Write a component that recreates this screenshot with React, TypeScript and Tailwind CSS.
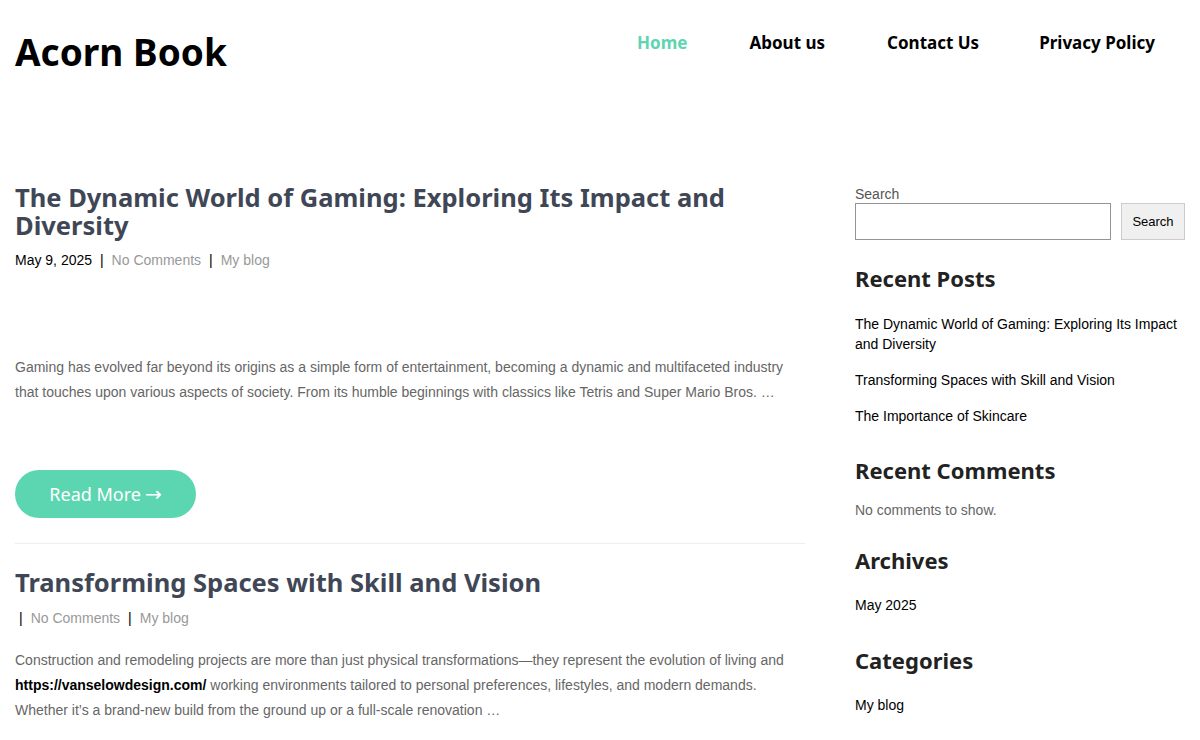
const headFont = "font-['Noto_Sans','Open_Sans',sans-serif]";
const bodyFont = "font-['Liberation_Sans',Arial,sans-serif]";

const navItems = ["Home", "About us", "Contact Us", "Privacy Policy"];

const recentPosts = [
  "The Dynamic World of Gaming: Exploring Its Impact and Diversity",
  "Transforming Spaces with Skill and Vision",
  "The Importance of Skincare",
];

const PostMeta = (props: { date?: string }) => (
  <div className={`${bodyFont} text-[14px] text-black leading-[20px]`}>
    {props.date && <span>{props.date} </span>}
    <span className="mx-[4px]">|</span>
    <span className="text-[#999] mx-[4px]">No Comments</span>
    <span className="mx-[4px]">|</span>
    <span className="text-[#999] mx-[4px]">My blog</span>
  </div>
);

const WidgetTitle = (props: { children: string }) => (
  <h2 className={`${headFont} text-[22px] font-bold text-[#222] leading-[30px]`}>{props.children}</h2>
);

export default function App() {
  return (
    <div className="w-[1200px] min-h-[740px] bg-white overflow-hidden">
      <header className="flex items-start justify-between pl-[15px] pr-[15px] pt-[26px]">
        <div className={`${headFont} text-[37px] font-bold text-black leading-[52px]`}>Acorn Book</div>
        <nav className="flex pt-[4px]">
          {navItems.map((item, index) => (
            <a
              key={item}
              className={`${headFont} px-[30px] text-[17px] font-bold leading-[26px] ${index === 0 ? "text-[#5dd5b0] pr-[32px]" : "text-black"} ${index === 1 ? "pr-[32px]" : ""}`}
            >
              {item}
            </a>
          ))}
        </nav>
      </header>

      <div className="flex gap-[50px] px-[15px] pt-[105px]">
        <main className="w-[790px]">
          <article className="border-b border-[#eeeeee] pb-[25px]">
            <h1 className={`${headFont} text-[25.5px] font-bold text-[#3f4756] leading-[28px]`}>
              The Dynamic World of Gaming: Exploring Its Impact and Diversity
            </h1>
            <div className="mt-[11px]">
              <PostMeta date="May 9, 2025" />
            </div>
            <p className={`${bodyFont} mt-[85px] text-[14px] leading-[25px] text-[#666]`}>
              Gaming has evolved far beyond its origins as a simple form of entertainment, becoming a dynamic and multifaceted industry that touches upon various aspects of society. From its humble beginnings with classics like Tetris and Super Mario Bros. …
            </p>
            <button className={`${headFont} mt-[65px] flex h-[48px] w-[181px] items-center justify-center gap-[4px] rounded-full bg-[#5cd6b0] text-white text-[18px]`}>
              <span>Read More</span>
              <span className="font-['DejaVu_Sans',sans-serif] text-[20px] leading-none">→</span>
            </button>
          </article>

          <article className="pt-[24px]">
            <h1 className={`${headFont} text-[25.5px] font-bold text-[#3f4756] leading-[28px]`}>
              Transforming Spaces with Skill and Vision
            </h1>
            <div className="mt-[12px]">
              <PostMeta />
            </div>
            <p className={`${bodyFont} mt-[20px] text-[14px] leading-[25px] text-[#666]`}>
              Construction and remodeling projects are more than just physical transformations—they represent the evolution of living and{" "}
              <a className="font-bold text-black">https://vanselowdesign.com/</a> working environments tailored to personal preferences, lifestyles, and modern demands. Whether it’s a brand-new build from the ground up or a full-scale renovation …
            </p>
          </article>
        </main>

        <aside className="w-[330px] pt-[2px]">
          <label className={`${bodyFont} block text-[14px] text-[#555] leading-[18px]`}>Search</label>
          <div className="flex gap-[10px]">
            <input className="h-[37px] w-[256px] border border-[#949494] bg-white outline-none" />
            <button className={`${bodyFont} h-[37px] w-[64px] border border-[#ccc] bg-[#f0f0f0] text-[13px] text-black`}>
              Search
            </button>
          </div>

          <div className="mt-[23px]">
            <WidgetTitle>Recent Posts</WidgetTitle>
            <ul className={`${bodyFont} mt-[21px] flex flex-col gap-[16px] text-[14px] leading-[20px] text-black`}>
              {recentPosts.map((post) => (
                <li key={post}>{post}</li>
              ))}
            </ul>
          </div>

          <div className="mt-[29px]">
            <WidgetTitle>Recent Comments</WidgetTitle>
            <p className={`${bodyFont} mt-[15px] text-[14px] leading-[20px] text-[#666]`}>No comments to show.</p>
          </div>

          <div className="mt-[25px]">
            <WidgetTitle>Archives</WidgetTitle>
            <p className={`${bodyFont} mt-[20px] text-[14px] leading-[20px] text-black`}>May 2025</p>
          </div>

          <div className="mt-[30px]">
            <WidgetTitle>Categories</WidgetTitle>
            <p className={`${bodyFont} mt-[20px] text-[14px] leading-[20px] text-black`}>My blog</p>
          </div>
        </aside>
      </div>
    </div>
  );
}
